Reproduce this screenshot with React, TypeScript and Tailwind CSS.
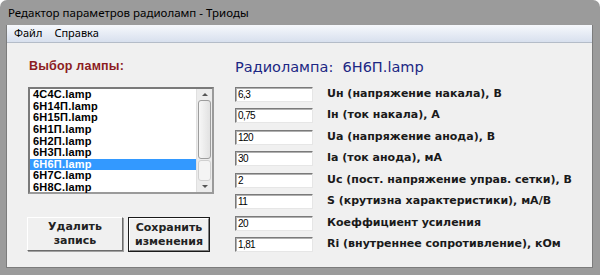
import React from 'react';

const lamps = [
  '4С4С.lamp',
  '6Н14П.lamp',
  '6Н15П.lamp',
  '6Н1П.lamp',
  '6Н2П.lamp',
  '6Н3П.lamp',
  '6Н6П.lamp',
  '6Н7С.lamp',
  '6Н8С.lamp',
];

const params = [
  { value: '6,3', label: 'Uн (напряжение накала), В' },
  { value: '0,75', label: 'Iн (ток накала), А' },
  { value: '120', label: 'Ua (напряжение анода), В' },
  { value: '30', label: 'Ia (ток анода), мА' },
  { value: '2', label: 'Uc (пост. напряжение управ. сетки), В' },
  { value: '11', label: 'S (крутизна характеристики), мА/В' },
  { value: '20', label: 'Коеффициент усиления' },
  { value: '1,81', label: 'Ri (внутреннее сопротивление), кОм' },
];

const SELECTED = 6;

export default function App() {
  return (
    <div className="w-[600px] h-[275px] bg-[#9b9b9b] rounded-t-[7px] overflow-hidden flex flex-col font-['Liberation_Sans',sans-serif]">
      {/* Title bar */}
      <div className="h-[25px] shrink-0 flex items-center pl-[8px] text-[11.5px] text-black font-['Noto_Sans','Liberation_Sans',sans-serif]">
        Редактор параметров радиоламп - Триоды
      </div>

      <div className="flex-1 ml-[6px] mr-[7px] mb-[7px] flex flex-col border-l border-r border-b border-[#7c7c7c]">
        {/* Menu */}
        <div className="h-[18px] shrink-0 flex items-center gap-[12px] pl-[7px] text-[11px] bg-linear-to-b from-[#f6f8fc] to-[#d8e0ee] border-b border-[#b4bcc8] font-['Noto_Sans','Liberation_Sans',sans-serif]">
          <span>Файл</span>
          <span>Справка</span>
        </div>

        {/* Client area */}
        <div className="flex-1 bg-[#f0f0f0] flex">
          {/* Left column */}
          <div className="w-[228px] shrink-0 pl-[22px] pt-[15px] flex flex-col">
            <div className="h-[16px] leading-[16px] text-[12.5px] font-bold text-[#8c1c22] tracking-[0.2px]">
              Выбор лампы:
            </div>

            <div className="mt-[13px] -ml-[1px] w-[186px] h-[107px] bg-white border-2 border-t-[#7a7a7a] border-l-[#7a7a7a] border-b-[#9a9a9a] border-r-[#9a9a9a] flex">
              <div className="flex-1 flex flex-col">
                {lamps.map((l, i) => (
                  <div
                    key={l}
                    className={`h-[11.65px] leading-[11.65px] pl-[3px] text-[11px] font-bold tracking-[0.2px] ${
                      i === SELECTED ? 'bg-[#3399ff] text-white' : 'text-black'
                    }`}
                  >
                    {l}
                  </div>
                ))}
              </div>
              {/* Scrollbar */}
              <div className="w-[16px] bg-[#ececec] border-l border-[#e0e0e0] flex flex-col items-center">
                <div className="h-[11px] flex items-center justify-center">
                  <div className="w-0 h-0 border-l-[3px] border-r-[3px] border-b-[3px] border-l-transparent border-r-transparent border-b-[#555]" />
                </div>
                <div className="w-[13px] h-[62px] rounded-[3px] border border-[#9d9d9d] bg-linear-to-r from-[#f7f7f7] to-[#e2e2e2]" />
                <div className="w-[13px] h-[22px] mt-[1px] rounded-[3px] border border-[#d0d0d0] bg-[#f4f4f4]" />
                <div className="flex-1" />
                <div className="h-[11px] flex items-center justify-center">
                  <div className="w-0 h-0 border-l-[3px] border-r-[3px] border-t-[3px] border-l-transparent border-r-transparent border-t-[#555]" />
                </div>
              </div>
            </div>

            <div className="mt-[23px] -ml-[2px] flex gap-[5px] font-['DejaVu_Sans',sans-serif] text-[11px] font-bold text-[#222]">
              <div className="w-[96px] h-[34px] border border-t-white border-l-white border-b-[#6b6b6b] border-r-[#6b6b6b] shadow-[1px_1px_0_#a0a0a0] bg-[#f0f0f0] flex flex-col items-center justify-center leading-[14px]">
                <span>Удалить</span>
                <span>запись</span>
              </div>
              <div className="w-[82px] h-[35px] border border-[#1a1a1a] bg-[#f0f0f0] flex">
                <div className="flex-1 border border-t-white border-l-white border-b-[#808080] border-r-[#808080] flex flex-col items-center justify-center leading-[14px]">
                  <span>Сохранить</span>
                  <span>изменения</span>
                </div>
              </div>
            </div>
          </div>

          {/* Right column */}
          <div className="flex-1 pt-[15px] flex flex-col">
            <div className="h-[18px] leading-[18px] text-[14.5px] text-[#1c2784] font-['DejaVu_Sans',sans-serif]">
              Радиолампа:&nbsp; 6Н6П.lamp
            </div>
            <div className="mt-[10.7px] flex flex-col gap-[6.5px]">
              {params.map((p) => (
                <div key={p.label} className="h-[15px] flex items-center">
                  <div className="w-[78px] h-[15px] bg-white border border-t-[#7a7a7a] border-l-[#7a7a7a] border-b-[#e6e6e6] border-r-[#e6e6e6] shadow-[inset_1px_1px_0_#b0b0b0] flex items-center pl-[2px] text-[10px] tracking-[-0.6px] text-black">
                    {p.value}
                  </div>
                  <div className="ml-[14px] text-[11px] font-bold text-[#1a1a1a] font-['DejaVu_Sans',sans-serif] whitespace-nowrap">
                    {p.label}
                  </div>
                </div>
              ))}
            </div>
          </div>
        </div>
      </div>
    </div>
  );
}
